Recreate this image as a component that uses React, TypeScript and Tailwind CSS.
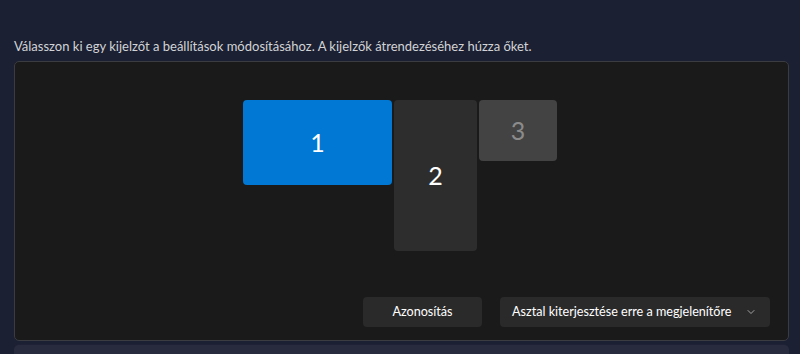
import { ChevronDown } from 'lucide-react';

interface Display {
  id: number;
  w: string;
  h: string;
  bg: string;
  fg: string;
}

const displays: Display[] = [
  { id: 1, w: 'w-[149px]', h: 'h-[85px]', bg: 'bg-[#0078d4]', fg: 'text-white' },
  { id: 2, w: 'w-[83px]', h: 'h-[151px]', bg: 'bg-[#2d2d2d]', fg: 'text-white' },
  { id: 3, w: 'w-[78px]', h: 'h-[61px]', bg: 'bg-[#434343]', fg: 'text-[#8b8b8b]' },
];

export default function App() {
  return (
    <div
      className="w-[800px] h-[354px] overflow-hidden bg-[#1b2032] pl-[14px] pr-[11px] pt-[37px]"
      style={{ fontFamily: 'Lato, "Noto Sans", sans-serif' }}
    >
      {/* Description */}
      <p className="text-[13px] leading-[18px] text-[#d2d3d6] whitespace-nowrap">
        Válasszon ki egy kijelzőt a beállítások módosításához. A kijelzők átrendezéséhez húzza őket.
      </p>

      {/* Arrangement panel */}
      <div className="mt-[6px] h-[280px] rounded-[5px] border border-[#3a3c42] bg-[#1a1a1a] flex flex-col">
        <div className="flex justify-center items-start gap-[2px] pt-[38px] pr-[3px]">
          {displays.map(d => (
            <div
              key={d.id}
              className={`${d.w} ${d.h} ${d.bg} ${d.fg} rounded-[4px] flex items-center justify-center text-[25px]`}
            >
              {d.id}
            </div>
          ))}
        </div>

        <div className="mt-auto mb-[13px] flex justify-end gap-[18px] pr-[18px]">
          <button className="w-[119px] h-[30px] rounded-[4px] bg-[#2a2a2a] text-[12.6px] text-white">
            Azonosítás
          </button>
          <button className="w-[270px] h-[30px] rounded-[4px] bg-[#2a2a2a] text-[12.6px] text-white flex items-center pl-[12px] pr-[13px] whitespace-nowrap">
            <span className="flex-1 text-left">Asztal kiterjesztése erre a megjelenítőre</span>
            <ChevronDown size={12} strokeWidth={1.5} className="text-[#c8c8c8]" />
          </button>
        </div>
      </div>

      {/* Next section peek */}
      <div className="mt-[3px] h-[12px] rounded-t-[5px] border-t border-[#1f2236] bg-[#272b3d]" />
    </div>
  );
}
